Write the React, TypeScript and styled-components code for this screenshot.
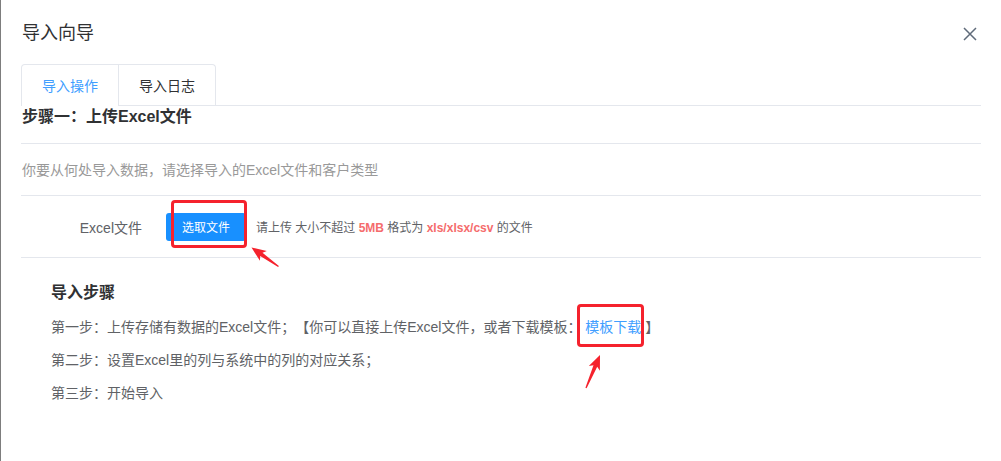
import React from "react";
import styled, { createGlobalStyle } from "styled-components";

const Global = createGlobalStyle`
  html, body { margin: 0; padding: 0; background: #fff; }
  body {
    font-family: "Liberation Sans", "Noto Sans CJK SC", sans-serif;
    color: #606266;
    border-left: 1px solid #7d7d7d;
    min-height: 461px;
    box-sizing: border-box;
    overflow: hidden;
    text-spacing-trim: space-all;
  }
`;

const Page = styled.div`
  position: relative;
  width: 1000px;
  height: 461px;
`;

const Header = styled.div`
  display: flex;
  align-items: center;
  justify-content: space-between;
  padding: 21px 24px 19px 21px;
  height: 24px;
`;

const Title = styled.div`
  font-size: 18px;
  line-height: 24px;
  color: #303133;
`;

const CloseBtn = styled.div`
  width: 14px;
  height: 14px;
  display: flex;
  margin-top: 2px;
`;

const Body = styled.div`
  padding: 0 20px 0 20px;
`;

const TabBar = styled.div`
  display: flex;
  border-bottom: 1px solid #e4e7ed;
`;

const TabList = styled.div`
  display: flex;
  border: 1px solid #e4e7ed;
  border-bottom: none;
  border-radius: 4px 4px 0 0;
  margin-bottom: -1px;
`;

const Tab = styled.div<{ $active?: boolean }>`
  width: 96px;
  height: 40px;
  display: flex;
  align-items: center;
  justify-content: center;
  font-size: 14px;
  color: ${(p) => (p.$active ? "#409eff" : "#303133")};
  border-bottom: 1px solid ${(p) => (p.$active ? "#fff" : "#e4e7ed")};
  & + & {
    border-left: 1px solid #e4e7ed;
  }
`;

const StepTitle = styled.div`
  font-size: 16px;
  font-weight: bold;
  line-height: 22px;
  color: #303133;
  padding: 0 0 15px 1px;
  border-bottom: 1px solid #e4e7ed;
`;

const Hint = styled.div`
  font-size: 14px;
  line-height: 20px;
  color: #999;
  padding: 16px 0 15px 1px;
  border-bottom: 1px solid #e4e7ed;
`;

const FormRow = styled.div`
  display: flex;
  align-items: center;
  height: 61px;
  border-bottom: 1px solid #e4e7ed;
`;

const Label = styled.div`
  width: 121px;
  padding-right: 24px;
  text-align: right;
  font-size: 14px;
  color: #606266;
`;

const Marked = styled.span<{ $t: number; $r: number; $b: number; $l: number }>`
  position: relative;
  display: inline-block;
  &::after {
    content: "";
    position: absolute;
    top: ${(p) => p.$t}px;
    right: ${(p) => p.$r}px;
    bottom: ${(p) => p.$b}px;
    left: ${(p) => p.$l}px;
    border: 3px solid #f5222d;
    border-radius: 4px;
    pointer-events: none;
  }
`;

const UploadButton = styled.button`
  width: 80px;
  height: 28px;
  border: none;
  border-radius: 3px;
  background: #1890ff;
  color: #fff;
  font-family: inherit;
  font-size: 12px;
  padding: 0;
  display: block;
`;

const UploadTip = styled.div`
  margin-left: 10px;
  font-size: 12px;
  color: #606266;
`;

const Em = styled.span`
  color: #f56c6c;
  font-weight: bold;
`;

const Steps = styled.div`
  padding: 24px 0 0 30px;
`;

const StepsTitle = styled.div`
  font-size: 16px;
  font-weight: bold;
  line-height: 22px;
  color: #303133;
  margin-bottom: 7px;
`;

const StepLine = styled.div`
  font-size: 14px;
  line-height: 33px;
  color: #606266;
`;

const Link = styled.span`
  color: #409eff;
`;

const Overlay = styled.svg`
  position: absolute;
  left: 0;
  top: 0;
  pointer-events: none;
`;

type P = [number, number];
function arrowPoints(H: P, T: P, headLen = 13, headW = 6, neckW = 2, tailW = 0.7) {
  const dx = T[0] - H[0];
  const dy = T[1] - H[1];
  const len = Math.hypot(dx, dy);
  const u: P = [dx / len, dy / len];
  const n: P = [-u[1], u[0]];
  const at = (d: number, s: number): P => [H[0] + u[0] * d + n[0] * s, H[1] + u[1] * d + n[1] * s];
  const pts: P[] = [
    H,
    at(headLen + 1.5, headW),
    at(headLen - 1, neckW),
    [T[0] + n[0] * tailW, T[1] + n[1] * tailW],
    [T[0] - n[0] * tailW, T[1] - n[1] * tailW],
    at(headLen - 1, -neckW),
    at(headLen + 1.5, -headW),
  ];
  return pts.map((p) => `${p[0].toFixed(1)},${p[1].toFixed(1)}`).join(" ");
}

export default function App() {
  return (
    <Page>
      <Global />
      <Header>
        <Title>导入向导</Title>
        <CloseBtn>
          <svg width="14" height="14" viewBox="0 0 14 14">
            <path d="M1 1 L13 13 M13 1 L1 13" stroke="#5f6b7a" strokeWidth="1.5" fill="none" />
          </svg>
        </CloseBtn>
      </Header>
      <Body>
        <TabBar>
          <TabList>
            <Tab $active>导入操作</Tab>
            <Tab>导入日志</Tab>
          </TabList>
        </TabBar>
        <StepTitle>步骤一：上传Excel文件</StepTitle>
        <Hint>你要从何处导入数据，请选择导入的Excel文件和客户类型</Hint>
        <FormRow>
          <Label>Excel文件</Label>
          <Marked $t={-13} $r={-1} $b={-7} $l={5}>
            <UploadButton>选取文件</UploadButton>
          </Marked>
          <UploadTip>
            请上传 大小不超过 <Em>5MB</Em> 格式为 <Em>xls/xlsx/csv</Em> 的文件
          </UploadTip>
        </FormRow>
        <Steps>
          <StepsTitle>导入步骤</StepsTitle>
          <StepLine>
            第一步：上传存储有数据的Excel文件；【你可以直接上传Excel文件，或者下载模板：{" "}
            <Marked $t={-7} $r={-3} $b={-3} $l={-8}>
              <Link>模板下载</Link>
            </Marked>{" "}
            】
          </StepLine>
          <StepLine>第二步：设置Excel里的列与系统中的列的对应关系；</StepLine>
          <StepLine>第三步：开始导入</StepLine>
        </Steps>
      </Body>
      <Overlay width="1000" height="461">
        <polygon points={arrowPoints([250.5, 247.5], [277.5, 266.5])} fill="#f5222d" />
        <polygon points={arrowPoints([599, 355], [585, 388])} fill="#f5222d" />
      </Overlay>
    </Page>
  );
}
